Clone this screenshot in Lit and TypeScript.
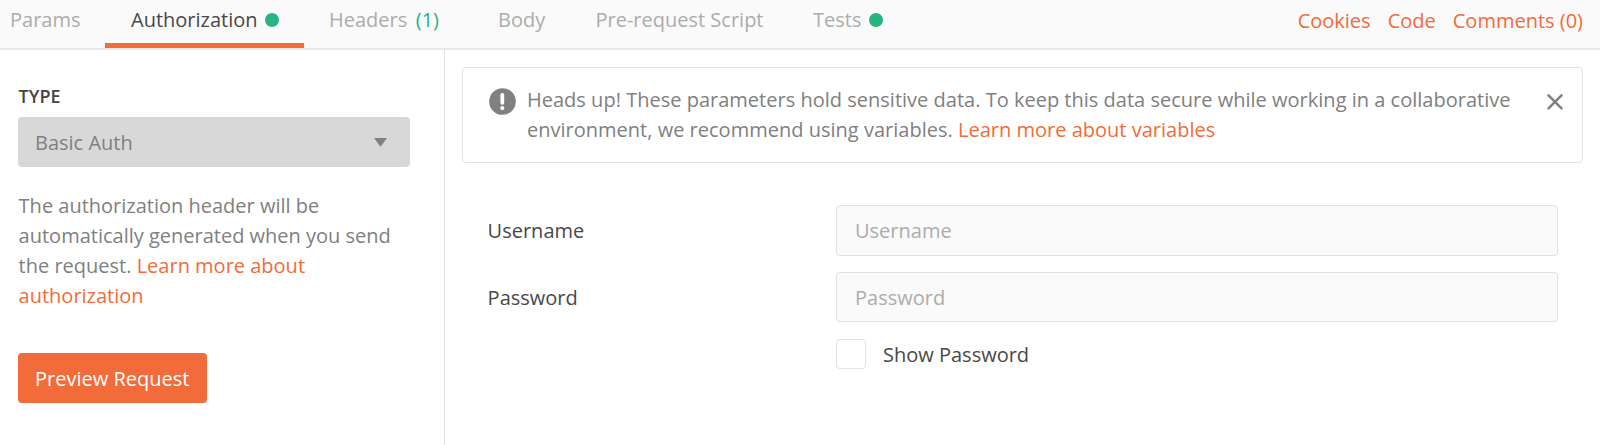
import { LitElement, html, css } from "lit";
import { customElement } from "lit/decorators.js";

@customElement("request-tabs")
class RequestTabs extends LitElement {
  static styles = css`
    :host { display: block; }
    .bar {
      box-sizing: border-box; height: 50px; display: flex; justify-content: space-between;
      background: #fafafa; border-bottom: 2px solid #e8e8e8; padding-right: 17px;
    }
    .tabs { display: grid; grid-template-columns: 105px 199px 169px 97.5px 217.5px 120px; }
    .tab {
      box-sizing: border-box; display: flex; align-items: center; height: 48px;
      padding: 0 0 8px 25px; color: #acacac; white-space: nowrap;
    }
    .tab:first-child { padding-left: 10px; }
    .active { color: #484848; border-bottom: 5px solid #f26b3a; padding-bottom: 3px; padding-left: 26px; }
    .dot { width: 14px; height: 14px; border-radius: 50%; background: #26b47f; margin-left: 8px; }
    .active .dot { margin-left: 7px; }
    .count { color: #26b47f; margin-left: 8.5px; }
    .links { display: flex; gap: 17px; align-items: center; height: 42px; color: #f26b3a; white-space: nowrap; }
  `;
  render() {
    return html`<div class="bar">
      <div class="tabs">
        <div class="tab">Params</div>
        <div class="tab active">Authorization<span class="dot"></span></div>
        <div class="tab">Headers<span class="count">(1)</span></div>
        <div class="tab">Body</div>
        <div class="tab">Pre-request Script</div>
        <div class="tab">Tests<span class="dot"></span></div>
      </div>
      <div class="links"><span>Cookies</span><span>Code</span><span>Comments (0)</span></div>
    </div>`;
  }
}

@customElement("auth-sidebar")
class AuthSidebar extends LitElement {
  static styles = css`
    :host { display: block; box-sizing: border-box; border-right: 1px solid #e2e2e2; padding: 33px 34px 0 18px; }
    .label { font-size: 18px; font-weight: 600; line-height: 26px; color: #454545; padding-left: 0.6px; }
    .select {
      box-sizing: border-box; margin-top: 8px; height: 50px; border-radius: 4px; background: #d8d8d8; color: #808080;
      display: flex; align-items: center; justify-content: space-between; padding: 1px 23px 0 17px;
    }
    .note { margin: 24px 0 0; padding-left: 0.6px; line-height: 30px; color: #808080; }
    .line { display: block; white-space: nowrap; }
    .link { color: #f26b3a; }
    .button {
      box-sizing: border-box; margin: 42px 0 0; width: 189px; height: 50px; padding: 2px 0 0 17px; border: 0; border-radius: 4px;
      background: #f26b3a; color: #fff; font: inherit; letter-spacing: inherit; text-align: left; white-space: nowrap; display: block;
    }
  `;
  render() {
    return html`
      <div class="label">TYPE</div>
      <div class="select"><span>Basic Auth</span>
        <svg width="13" height="9" viewBox="0 0 13 9"><path d="M0 0H13L6.5 8.7Z" fill="#808080" /></svg>
      </div>
      <p class="note">
        <span class="line">The authorization header will be</span>
        <span class="line">automatically generated when you send</span>
        <span class="line">the request. <span class="link">Learn more about</span></span>
        <span class="line link">authorization</span>
      </p>
      <button class="button">Preview Request</button>`;
  }
}

@customElement("heads-up")
class HeadsUp extends LitElement {
  static styles = css`
    :host {
      display: flex; box-sizing: border-box; height: 96px; border: 1px solid #e2e2e2; border-radius: 4px;
      padding: 17px 19px 0 26px; color: #808080; line-height: 30px;
    }
    .icon { flex: none; margin-top: 3px; }
    .text { flex: 1; padding-left: 11px; white-space: nowrap; letter-spacing: 0.01px; }
    .line { display: block; }
    .link { color: #f26b3a; }
    .close { flex: none; margin-top: 9px; }
  `;
  render() {
    return html`
      <svg class="icon" width="27" height="27" viewBox="0 0 27 27">
        <circle cx="13.5" cy="13.5" r="13.3" fill="#808080" />
        <path d="M13.3 6.8V14.8" stroke="#fff" stroke-width="3.8" stroke-linecap="round" />
        <circle cx="13.3" cy="20.1" r="2.1" fill="#fff" />
      </svg>
      <div class="text">
        <span class="line">Heads up! These parameters hold sensitive data. To keep this data secure while working in a collaborative</span>
        <span class="line">environment, we recommend using variables. <span class="link">Learn more about variables</span></span>
      </div>
      <svg class="close" width="16" height="16" viewBox="0 0 16 16">
        <path d="M1.5 1.3L14.5 14.3M14.5 1.3L1.5 14.3" stroke="#808080" stroke-width="2.5" stroke-linecap="round" />
      </svg>`;
  }
}

@customElement("auth-form")
class AuthForm extends LitElement {
  static styles = css`
    :host { display: grid; grid-template-columns: 349px 722px; color: #484848; padding: 42px 0 0 25px; row-gap: 16px; }
    .name { align-self: center; padding-left: 0.6px; }
    .second-name { padding-top: 2px; }
    .input {
      box-sizing: border-box; width: 100%; height: 51px; border: 1px solid #e2e2e2; border-radius: 4px; background: #fafafa;
      padding: 0 18px; font: inherit; letter-spacing: inherit; color: #505050; outline: none;
    }
    .second { height: 50px; }
    .input::placeholder { color: #acacac; opacity: 1; }
    .check { grid-column: 2; display: flex; align-items: center; gap: 17px; }
    .caption { padding-top: 2px; }
    .box { box-sizing: border-box; width: 30px; height: 30px; border: 1px solid #e2e2e2; border-radius: 4px; background: #fff; }
  `;
  render() {
    return html`
      <span class="name">Username</span><input class="input" placeholder="Username" />
      <span class="name second-name">Password</span><input class="input second" placeholder="Password" />
      <label class="check"><span class="box"></span><span class="caption">Show Password</span></label>`;
  }
}

@customElement("app-root")
class AppRoot extends LitElement {
  static styles = css`
    :host {
      display: block; height: 445px; overflow: hidden; background: #fff;
      font-family: "Open Sans", sans-serif; font-size: 20px; line-height: 30px;
    }
    .body { display: grid; grid-template-columns: 445px 1fr; height: 395px; }
    .main { padding: 17px 17px 0 17px; }
  `;
  render() {
    return html`<request-tabs></request-tabs>
      <div class="body">
        <auth-sidebar></auth-sidebar>
        <div class="main"><heads-up></heads-up><auth-form></auth-form></div>
      </div>`;
  }
}
